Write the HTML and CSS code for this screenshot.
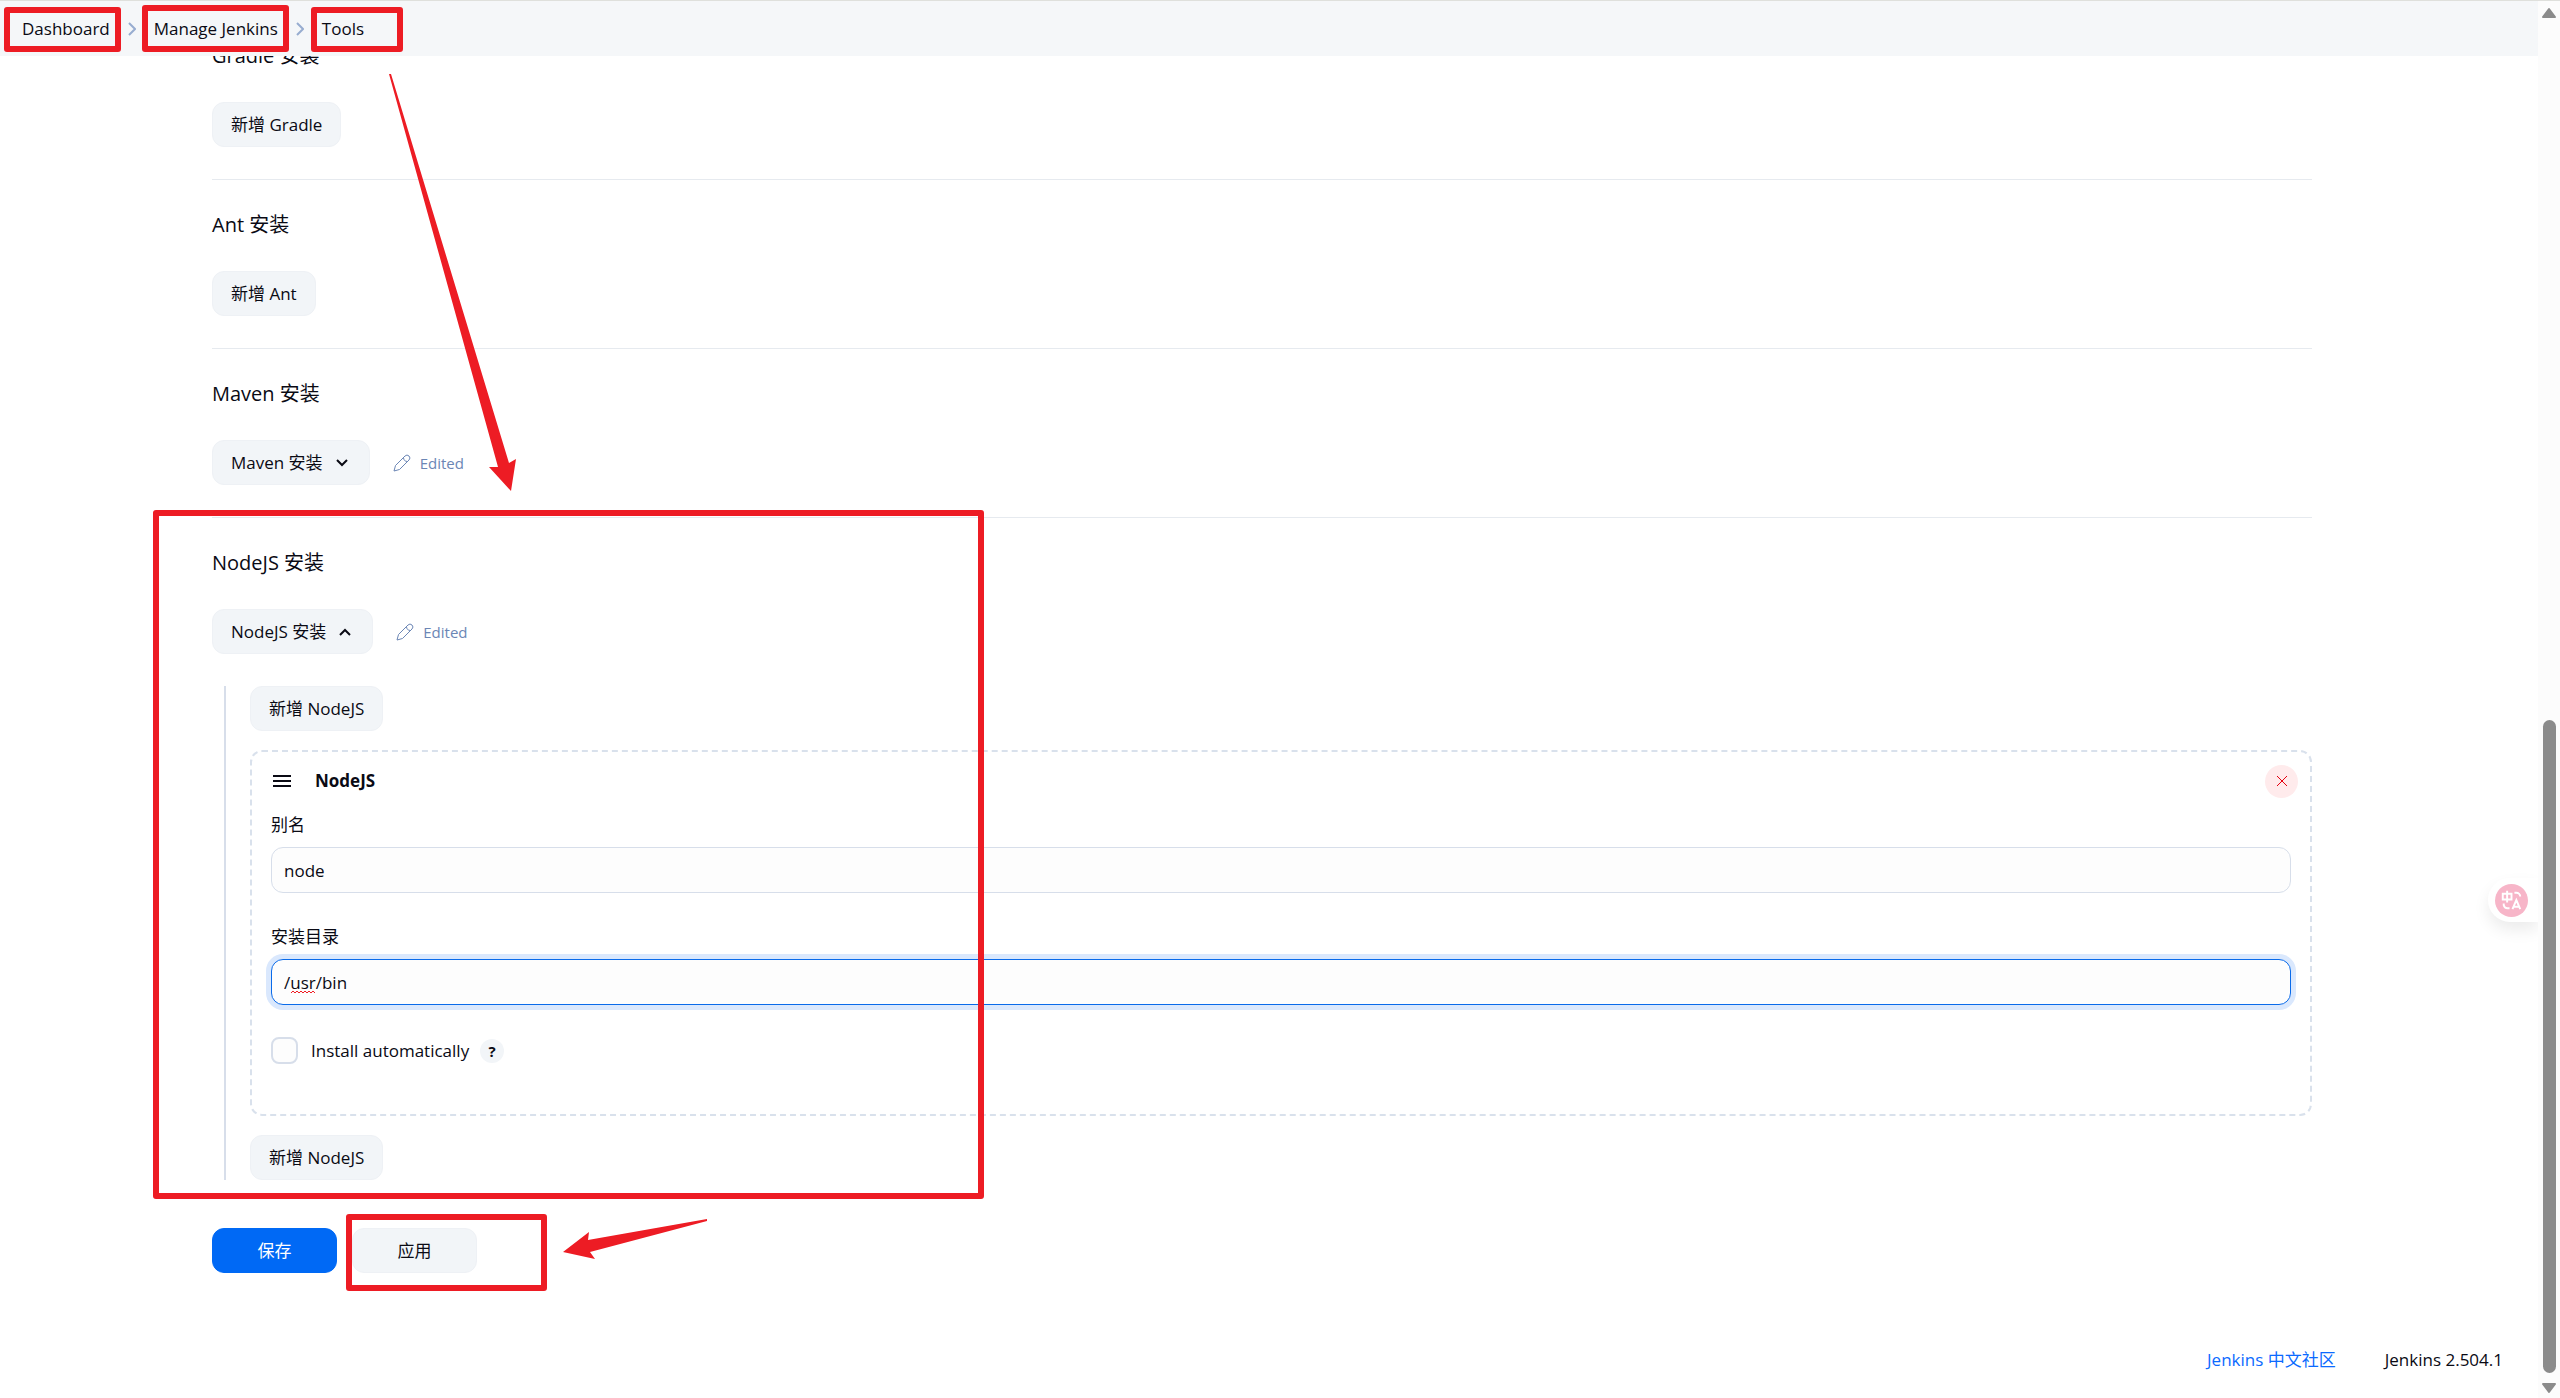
FILE: index.html
```
<!DOCTYPE html>
<html lang="zh-CN">

<head>
  <meta charset="UTF-8">
  <meta name="viewport" content="width=device-width, initial-scale=1.0">
  <title>Tools - Jenkins</title>
  <link rel="stylesheet" href="styles.css">
</head>

<body>

  <header class="breadcrumbs">
    <a href="#">Dashboard</a>
    <svg class="crumb-arrow" viewBox="0 0 8 14"><path d="M1 1l6 6-6 6" /></svg>
    <a href="#">Manage Jenkins</a>
    <svg class="crumb-arrow" viewBox="0 0 8 14"><path d="M1 1l6 6-6 6" /></svg>
    <a href="#">Tools</a>
  </header>

  <main class="content">
    <section class="section">
      <h2>Gradle <span>安装</span></h2>
      <button type="button" class="button">新增 Gradle</button>
    </section>

    <section class="section">
      <h2>Ant <span>安装</span></h2>
      <button type="button" class="button">新增 Ant</button>
    </section>

    <section class="section">
      <h2>Maven <span>安装</span></h2>
      <div class="row">
        <button type="button" class="button">Maven 安装
          <svg class="chevron" viewBox="0 0 12 8"><path d="M1 1l5 5 5-5" /></svg>
        </button>
        <span class="edited">
          <svg viewBox="0 0 18 18"><path d="M1 17l1.500-5.500L12 2a2.500 2.500 0 0 1 4 4L6.500 15.500zM10.500 3.500c0 2.500 1.500 4 4 4" /></svg>
          Edited
        </span>
      </div>
    </section>

    <section class="section">
      <h2>NodeJS <span>安装</span></h2>
      <div class="row">
        <button type="button" class="button">NodeJS 安装
          <svg class="chevron" viewBox="0 0 12 8"><path d="M1 7l5-5 5 5" /></svg>
        </button>
        <span class="edited">
          <svg viewBox="0 0 18 18"><path d="M1 17l1.500-5.500L12 2a2.500 2.500 0 0 1 4 4L6.500 15.500zM10.500 3.500c0 2.500 1.500 4 4 4" /></svg>
          Edited
        </span>
      </div>

      <div class="repeated">
        <button type="button" class="button">新增 NodeJS</button>

        <div class="chunk">
          <div class="chunk-header">
            <svg class="handle" viewBox="0 0 18 12"><path d="M0 1h18M0 6h18M0 11h18" /></svg>
            <b>NodeJS</b>
            <button type="button" class="delete" aria-label="删除">
              <svg viewBox="0 0 10 10"><path d="M0 0l10 10M10 0L0 10" /></svg>
            </button>
          </div>

          <div class="field">
            <label for="name">别名</label>
            <input type="text" id="name" class="input" value="node">
          </div>

          <div class="field">
            <label for="home">安装目录</label>
            <input type="text" id="home" class="input input-focused" value="/usr/bin">
            <svg class="misspelled" viewBox="0 0 26 4"><path d="M0 3l2-2 2 2 2-2 2 2 2-2 2 2 2-2 2 2 2-2 2 2 2-2 2 2" /></svg>
          </div>

          <div class="check">
            <input type="checkbox" id="auto">
            <label for="auto">Install automatically</label>
            <a href="#" class="help">?</a>
          </div>
        </div>

        <button type="button" class="button">新增 NodeJS</button>
      </div>
    </section>

    <div class="actions">
      <button type="submit" class="button button-wide button-primary">保存</button>
      <button type="button" class="button button-wide">应用</button>
    </div>
  </main>

  <footer class="footer">
    <a href="#">Jenkins 中文社区</a>
    <span>Jenkins 2.504.1</span>
  </footer>

  <button type="button" class="translate" aria-label="翻译">
    <svg viewBox="0 0 34 34">
      <circle cx="17" cy="17" r="17" />
      <path d="M8 10h9v6H8zM12.500 7v12M20 9h2a4 4 0 0 1 4 4M9 20v2a4 4 0 0 0 4 3h2M18 26l4-9.500 4 9.500M19.500 23.500h5" />
    </svg>
  </button>

  <div class="scrollbar">
    <svg viewBox="0 0 16 12"><path d="M8 2l6 8H2z" /></svg>
    <div class="thumb"></div>
    <svg viewBox="0 0 16 12"><path d="M8 10L2 2h12z" /></svg>
  </div>

  <!-- red marks drawn over the page -->
  <svg class="marks" width="1000" height="1300" viewBox="0 0 1000 1300">
    <rect x="7" y="10" width="111" height="39" />
    <rect x="145" y="8" width="141" height="41" />
    <rect x="314" y="10" width="86" height="39" />
    <rect x="156" y="513" width="825" height="683" />
    <rect x="349" y="1217" width="195" height="71" />
    <path d="M389 74h2l118 389 7-4-5 32-22-24 9 0z" />
    <path d="M707 1219v2l-117 31 5 7-32-7 26-20-1 8z" />
  </svg>

</body>

</html>
```
FILE: styles.css
```
* {
  box-sizing: border-box;
}

body {
  display: flex;
  flex-direction: column;
  min-height: 100vh;
  margin: 0;
  background-color: #fff;
  color: #0a0a14;
  font-family: "Open Sans", "Noto Sans CJK SC", sans-serif;
  font-size: 17px;
  line-height: 24px;
}

button,
input {
  font: inherit;
  color: inherit;
}

a {
  color: inherit;
  text-decoration: none;
}

svg {
  flex-shrink: 0;
  fill: none;
  stroke: currentColor;
}

.breadcrumbs {
  position: fixed;
  top: 0;
  left: 0;
  right: 0;
  z-index: 1;
  display: flex;
  align-items: center;
  gap: 18px;
  height: 56px;
  padding-left: 22px;
  border-top: 1px solid #dfe0dc;
  background-color: #f5f7f9;
}

.crumb-arrow {
  width: 8px;
  height: 14px;
  color: #98add0;
  stroke-width: 2;
}

.content {
  padding: 42px 248px 0 212px;
}

.section + .section {
  margin-top: 32px;
  padding-top: 31px;
  border-top: 1px solid #e6eaef;
}

h2 {
  margin: 0 0 32px;
  font-size: 20px;
  font-weight: 500;
  line-height: 28px;
}

h2 span {
  font-weight: 400;
}

.button {
  display: flex;
  align-items: center;
  justify-content: center;
  gap: 13px;
  height: 45px;
  padding: 0 18px;
  border: 1px solid #eef1f5;
  border-radius: 12px;
  background-color: #f2f5f8;
}

.chevron {
  width: 12px;
  height: 8px;
  margin-right: 3px;
  stroke-width: 2;
}

.row {
  display: flex;
  align-items: center;
  gap: 23px;
}

.edited {
  display: flex;
  align-items: center;
  gap: 9px;
  color: #6b86b5;
  font-size: 15px;
}

.edited svg {
  width: 18px;
  height: 18px;
  stroke-linejoin: round;
}

.repeated {
  display: flex;
  flex-direction: column;
  align-items: flex-start;
  gap: 19px;
  margin: 32px 0 0 12px;
  padding-left: 24px;
  border-left: 2px solid #d7deea;
}

.chunk {
  width: 100%;
  padding: 11px 19px 50px;
  border: 2px dashed #d9e1ec;
  border-radius: 12px;
}

.chunk-header {
  display: flex;
  align-items: center;
  gap: 24px;
  height: 36px;
  padding-left: 2px;
}

.handle {
  width: 18px;
  height: 12px;
  stroke-width: 2;
}

.delete {
  display: flex;
  align-items: center;
  justify-content: center;
  width: 33px;
  height: 33px;
  margin: 0 -7px 0 auto;
  padding: 0;
  border: 0;
  border-radius: 50%;
  background-color: #ffebec;
  color: #e6000f;
}

.delete svg {
  width: 10px;
  height: 10px;
}

.field {
  position: relative;
  margin-bottom: 32px;
}

.field label {
  display: block;
  padding: 14px 0 10px;
}

.field + .field label {
  padding-top: 0;
}

.input {
  display: block;
  width: 100%;
  height: 46px;
  padding: 0 12px;
  border: 1px solid #d7deea;
  border-radius: 12px;
  background-color: #fdfdfd;
}

.input-focused {
  border-color: #0a6bea;
  box-shadow: 0 0 0 5px #dae8fd;
}

.misspelled {
  position: absolute;
  left: 20px;
  bottom: 11px;
  width: 26px;
  height: 4px;
  color: #f01c24;
}

.check {
  display: flex;
  align-items: center;
}

.check input {
  appearance: none;
  width: 27px;
  height: 27px;
  margin: 0 13px 0 0;
  border: 2px solid #d7deea;
  border-radius: 8px;
  background-color: #fdfdfd;
}

.help {
  width: 24px;
  height: 24px;
  margin-left: 11px;
  border-radius: 50%;
  background-color: #f2f5f8;
  font-size: 15px;
  font-weight: 700;
  text-align: center;
}

.actions {
  display: flex;
  gap: 15px;
  margin-top: 48px;
}

.button-wide {
  width: 125px;
}

.button-primary {
  border-color: #0069f5;
  background-color: #0069f5;
  color: #fff;
}

.footer {
  display: flex;
  justify-content: flex-end;
  gap: 49px;
  margin-top: auto;
  padding: 24px 57px 26px 0;
}

.footer a {
  color: #0b6aff;
}

.translate {
  position: fixed;
  top: 878px;
  right: 22px;
  display: flex;
  align-items: center;
  width: 50px;
  height: 44px;
  padding: 0 0 0 7px;
  border: 0;
  border-radius: 22px 0 0 22px;
  background-color: #fff;
  box-shadow: 0 8px 16px rgba(0, 0, 0, 0.08);
}

.translate svg {
  width: 33px;
  height: 33px;
}

.translate circle {
  fill: #f7b5c8;
  stroke: none;
}

.translate path {
  stroke: #fff;
  stroke-width: 2;
}

.scrollbar {
  position: fixed;
  top: 1px;
  right: 0;
  bottom: 0;
  z-index: 2;
  display: flex;
  flex-direction: column;
  align-items: center;
  justify-content: space-between;
  width: 22px;
  padding: 6px 0 4px;
  background-color: #fcfcfc;
}

.scrollbar svg {
  width: 16px;
  height: 12px;
  fill: #8b8b8b;
  stroke: #8b8b8b;
  stroke-width: 2;
  stroke-linejoin: round;
}

.thumb {
  width: 13px;
  height: 653px;
  margin: auto 0 9px;
  border-radius: 7px;
  background-color: #8b8b8b;
}

.marks {
  position: absolute;
  top: 0;
  left: 0;
  z-index: 3;
  pointer-events: none;
}

.marks rect {
  stroke: #ed1c24;
  stroke-width: 6;
  stroke-linejoin: round;
}

.marks path {
  fill: #ed1c24;
  stroke: none;
}
```
